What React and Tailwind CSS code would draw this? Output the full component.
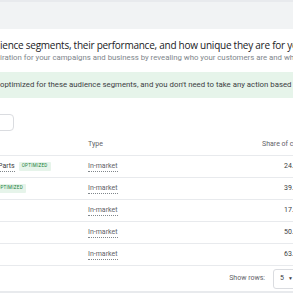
export default function App() {
  const rows = [
    { name: "Parts", badge: true, badgeCut: false, v: "24" },
    { name: "", badge: true, badgeCut: true, v: "39" },
    { name: "", badge: false, v: "17" },
    { name: "", badge: false, v: "50" },
    { name: "", badge: false, v: "63" },
  ];
  return (
    <div className="w-[293px] h-[293px] overflow-hidden bg-white flex flex-col font-['Roboto',sans-serif] text-[#3c4043]">
      <div className="h-[29px] shrink-0 bg-[#f1f3f4] border-t-2 border-[#e8eaed]" />
      <div className="pt-[9px] whitespace-nowrap">
        <div className="text-[10px] leading-[14px] font-medium text-[#202124] font-['Open_Sans',sans-serif] tracking-[-0.25px]">
          ience segments, their performance, and how unique they are for your business
        </div>
        <div className="text-[7.8px] leading-[10px] text-[#80868b] mt-[1px]">
          iration for your campaigns and business by revealing who your customers are and what they like
        </div>
      </div>
      <div className="mt-[9px] h-[26px] shrink-0 bg-[#e6f4ea] flex items-center whitespace-nowrap text-[7.8px] text-[#3c4043]">
        optimized for these audience segments, and you don't need to take any action based on this information.
      </div>
      <div className="mt-[16px] h-[17px] w-[30px] ml-[-16px] shrink-0 border border-[#dadce0] rounded-[4px]" />
      <div className="mt-[2px] h-[23px] shrink-0 flex items-center border-b border-[#e8eaed] text-[7px] text-[#5f6368] whitespace-nowrap">
        <div className="w-[88px] shrink-0" />
        <div className="w-[174px] shrink-0">Type</div>
        <div>Share of clicks</div>
      </div>
      {rows.map((r, i) => (
        <div key={i} className="h-[22px] shrink-0 flex items-center border-b border-[#e8eaed] text-[7px] whitespace-nowrap">
          <div className="w-[88px] shrink-0 flex items-center overflow-hidden">
            {r.name && <span className="mr-[4px] ml-[-2px] border-b border-dotted border-[#80868b]">{r.name}</span>}
            {r.badge && (
              <span className={`bg-[#e6f4ea] text-[#188038] text-[4.5px] tracking-[0.3px] px-[3px] h-[9px] flex items-center rounded-[1px] ${r.badgeCut ? "ml-[-6px]" : ""}`}>
                OPTIMIZED
              </span>
            )}
          </div>
          <div className="w-[196px] shrink-0 text-[#5f6368]">
            <span className="border-b border-dotted border-[#80868b] pb-[1px]">In-market</span>
          </div>
          <div>{r.v}.5%</div>
        </div>
      ))}
      <div className="h-[25px] shrink-0 flex items-center justify-end text-[7px] text-[#5f6368] whitespace-nowrap">
        <span className="mr-[8px]">Show rows:</span>
        <div className="w-[30px] h-[20px] shrink-0 mr-[-10px] border border-[#dadce0] rounded-[3px] flex items-center pl-[6px] gap-[4px] text-[#3c4043]">
          <span>5</span>
          <span className="text-[5px]">▼</span>
        </div>
      </div>
      <div className="flex-1 bg-[#e8eaed]" />
    </div>
  );
}
